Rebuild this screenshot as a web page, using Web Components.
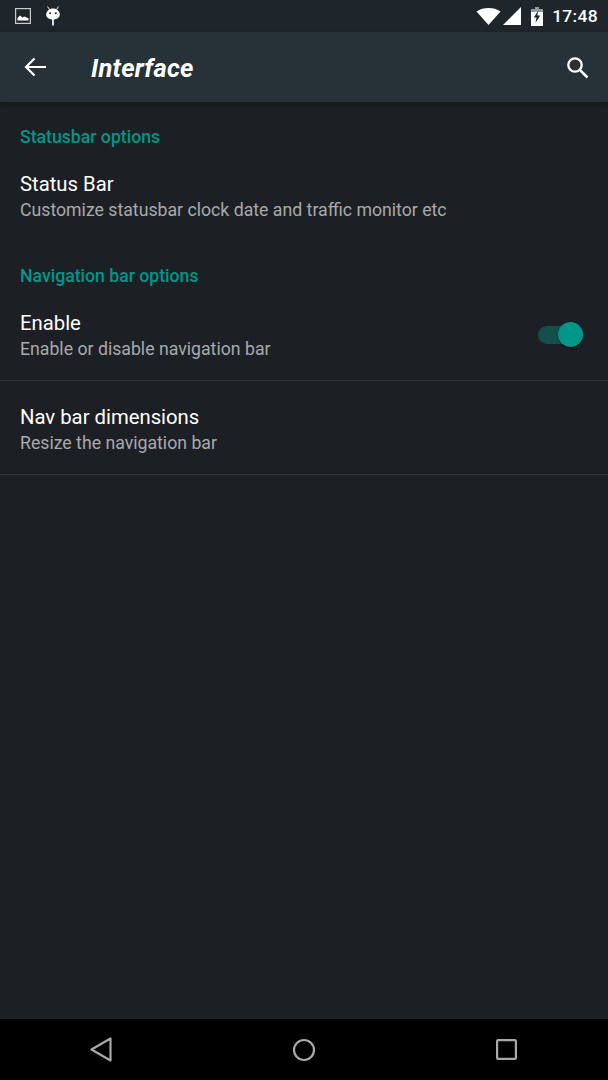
<!DOCTYPE html>
<html>
<head>
<meta charset="utf-8">
<style>
    html, body { margin: 0; height: 100%; background: #1c1f24; }
    body { font-family: Roboto, "Noto Sans", sans-serif; }
    settings-app { height: 1080px; }
</style>
</head>
<body>
<settings-app>
    <status-bar slot="top"></status-bar>
    <app-toolbar slot="top" heading="Interface"></app-toolbar>
    <section-header>Statusbar options</section-header>
    <pref-row heading="Status Bar" summary="Customize statusbar clock date and traffic monitor etc" class="first"></pref-row>
    <section-header class="second">Navigation bar options</section-header>
    <pref-row heading="Enable" summary="Enable or disable navigation bar" toggle divider></pref-row>
    <pref-row heading="Nav bar dimensions" summary="Resize the navigation bar" divider></pref-row>
    <nav-bar slot="bottom"></nav-bar>
</settings-app>
<script>
class SettingsApp extends HTMLElement {
    connectedCallback() {
        this.attachShadow({ mode: 'open' });
        this.shadowRoot.innerHTML = `
            <style>
                :host { display: flex; flex-direction: column; background: #1c1f24; overflow: hidden; }
                main { flex: 1; display: flex; flex-direction: column; }
            </style>
            <slot name="top"></slot>
            <main><slot></slot></main>
            <slot name="bottom"></slot>
        `;
    }
}

class StatusBar extends HTMLElement {
    connectedCallback() {
        this.attachShadow({ mode: 'open' });
        this.shadowRoot.innerHTML = `
            <style>
                :host { display: flex; align-items: center; height: 32px; background: #1f262b; color: #fff; box-sizing: border-box; padding: 0 10px 0 15px; }
                svg { display: block; }
                .left { display: flex; align-items: center; gap: 14px; flex: 1; }
                .right { display: flex; align-items: center; }
                .clock { font-size: 17.4px; font-weight: 500; margin-left: 9px; letter-spacing: 0.35px; }
            </style>
            <div class="left">
                <svg width="16" height="16" viewBox="0 0 16 16">
                    <rect x="0.6" y="0.6" width="14.8" height="14.8" fill="none" stroke="#c9cbcc" stroke-width="1.2"/>
                    <path d="M2.5 12.5V10l2.5-2.6 2.6 2 1.6-1 1.4 .7 3 1.5v1.9z" fill="#fff"/>
                </svg>
                <svg width="16" height="20" viewBox="0 0 16 20">
                    <path d="M2.500 0.500l2 3M13.500 0.500l-2 3" stroke="#e8e8e8" stroke-width="1" fill="none"/>
                    <path d="M8 2.500c3.800 0 6.800 2.700 6.800 6 0 2.800-2.500 5-6.800 5s-6.800-2.200-6.800-5c0-3.300 3-6 6.800-6z" fill="#fff"/>
                    <circle cx="5.200" cy="7.200" r="1" fill="#1f262b"/>
                    <circle cx="10.800" cy="7.200" r="1" fill="#1f262b"/>
                    <rect x="7.100" y="13" width="1.800" height="6.500" fill="#f2f2f2"/>
                </svg>
            </div>
            <div class="right">
                <svg width="25" height="17" viewBox="0 0 25 17" style="margin-right:2px">
                    <path d="M0.500 3.500C4 1 8 0 12.500 0S21 1 24.500 3.500L12.500 17z" fill="#fff"/>
                </svg>
                <svg width="18" height="18" viewBox="0 0 18 18" style="margin-right:10px">
                    <path d="M0 18L18 0V18z" fill="#fff"/>
                </svg>
                <svg width="12" height="19" viewBox="0 0 12 19">
                    <path d="M4 0h4v2h4v17H0V2h4z" fill="#fff"/>
                    <path d="M0 0h12v5H0z" fill="#1f262b" opacity=".45"/>
                    <path d="M7.300 3.500L2.800 10.500h2.700l-1 5.500 4.700-7.500H6.300z" fill="#1f262b"/>
                </svg>
                <span class="clock">17:48</span>
            </div>
        `;
    }
}

class AppToolbar extends HTMLElement {
    connectedCallback() {
        this.attachShadow({ mode: 'open' });
        this.shadowRoot.innerHTML = `
            <style>
                :host { display: flex; align-items: center; height: 70px; background: #263238; color: #fff; box-sizing: border-box; padding: 0 19px 0 24px; position: relative; box-shadow: 0 2px 4px rgba(0,0,0,.35); }
                svg { display: block; }
                h1 { flex: 1; margin: 2px 0 0 44px; font-size: 25.5px; font-weight: 700; font-style: italic; letter-spacing: 0.25px; }
            </style>
            <svg width="23" height="20" viewBox="0 0 23 20">
                <path d="M22 10H2M10.500 1.500L2 10l8.500 8.500" fill="none" stroke="#fff" stroke-width="2.200"/>
            </svg>
            <h1>${this.getAttribute('heading')}</h1>
            <svg width="23" height="23" viewBox="0 0 23 23">
                <circle cx="9" cy="9" r="6.700" fill="none" stroke="#fff" stroke-width="2.300"/>
                <path d="M13.800 13.800L21.500 21.500" stroke="#fff" stroke-width="2.500"/>
            </svg>
        `;
    }
}

class SectionHeader extends HTMLElement {
    connectedCallback() {
        this.attachShadow({ mode: 'open' });
        this.shadowRoot.innerHTML = `
            <style>
                :host { display: block; color: #009688; font-size: 17.65px; font-weight: 500; line-height: 20px; padding: 25px 20px 0; }
                :host(.second) { padding: 26px 20px 1px; }
            </style>
            <slot></slot>
        `;
    }
}

class PrefRow extends HTMLElement {
    connectedCallback() {
        this.attachShadow({ mode: 'open' });
        const toggle = this.hasAttribute('toggle') ? '<toggle-switch></toggle-switch>' : '';
        this.shadowRoot.innerHTML = `
            <style>
                :host { display: flex; align-items: center; height: 93px; box-sizing: border-box; padding: 4px 25px 0 20px; }
                :host([divider]) { border-bottom: 1px solid #34373b; height: 94px; }
                :host(.first) { padding-top: 6px; }
                .text { flex: 1; }
                .title { color: #fff; font-size: 20.3px; line-height: 29px; margin-bottom: -2px; }
                .sub { color: #a8aaac; font-size: 17.7px; line-height: 27px; }
                toggle-switch { margin-top: -2px; }
            </style>
            <div class="text">
                <div class="title">${this.getAttribute('heading')}</div>
                <div class="sub">${this.getAttribute('summary')}</div>
            </div>
            ${toggle}
        `;
    }
}

class ToggleSwitch extends HTMLElement {
    connectedCallback() {
        this.attachShadow({ mode: 'open' });
        this.shadowRoot.innerHTML = `
            <style>
                :host { display: block; position: relative; width: 45px; height: 18px; }
                .track { width: 40px; height: 18px; border-radius: 9px; background: #134f4b; }
                .thumb { position: absolute; right: 0; top: -4px; width: 25px; height: 25px; border-radius: 50%; background: #009688; box-shadow: 0 1px 2px rgba(0,0,0,.4); }
            </style>
            <div class="track"></div>
            <div class="thumb"></div>
        `;
    }
}

class NavBar extends HTMLElement {
    connectedCallback() {
        this.attachShadow({ mode: 'open' });
        this.shadowRoot.innerHTML = `
            <style>
                :host { display: flex; align-items: center; justify-content: space-between; height: 61px; background: #000; box-sizing: border-box; padding: 0 91px 0 90px; }
                svg { display: block; }
            </style>
            <svg width="22" height="25" viewBox="0 0 22 25">
                <path d="M20.500 1.500V23.500L1.500 12.500z" fill="none" stroke="#a9a9a9" stroke-width="2.200" stroke-linejoin="round"/>
            </svg>
            <svg width="24" height="24" viewBox="0 0 24 24">
                <circle cx="12" cy="12" r="10" fill="none" stroke="#a9a9a9" stroke-width="2.200"/>
            </svg>
            <svg width="21" height="21" viewBox="0 0 21 21">
                <rect x="1.100" y="1.100" width="18.800" height="18.800" rx="1" fill="none" stroke="#a9a9a9" stroke-width="2.200"/>
            </svg>
        `;
    }
}

customElements.define('settings-app', SettingsApp);
customElements.define('status-bar', StatusBar);
customElements.define('app-toolbar', AppToolbar);
customElements.define('section-header', SectionHeader);
customElements.define('pref-row', PrefRow);
customElements.define('toggle-switch', ToggleSwitch);
customElements.define('nav-bar', NavBar);
</script>
</body>
</html>
